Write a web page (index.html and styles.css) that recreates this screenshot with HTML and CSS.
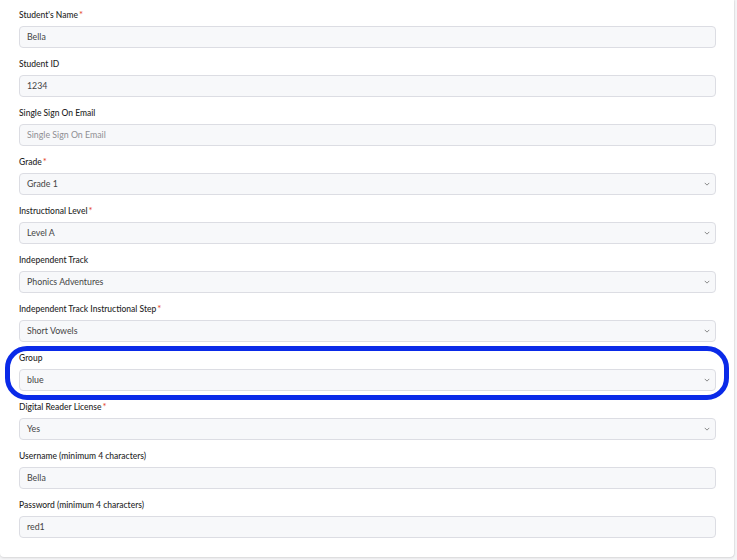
FILE: index.html
```html
<!DOCTYPE html>
<html>
<head>
<meta charset="utf-8">
<link rel="stylesheet" href="styles.css">
</head>
<body>
<div class="card">
  <form class="form">
    <div class="field">
      <label class="label">Student's Name<span class="req">*</span></label>
      <div class="input">Bella</div>
    </div>
    <div class="field">
      <label class="label">Student ID</label>
      <div class="input">1234</div>
    </div>
    <div class="field">
      <label class="label">Single Sign On Email</label>
      <div class="input placeholder">Single Sign On Email</div>
    </div>
    <div class="field">
      <label class="label">Grade<span class="req">*</span></label>
      <div class="input select">Grade 1<svg class="chev" viewBox="0 0 8 5"><path d="M1 1l3 3 3-3" /></svg></div>
    </div>
    <div class="field">
      <label class="label">Instructional Level<span class="req">*</span></label>
      <div class="input select">Level A<svg class="chev" viewBox="0 0 8 5"><path d="M1 1l3 3 3-3" /></svg></div>
    </div>
    <div class="field">
      <label class="label">Independent Track</label>
      <div class="input select">Phonics Adventures<svg class="chev" viewBox="0 0 8 5"><path d="M1 1l3 3 3-3" /></svg></div>
    </div>
    <div class="field">
      <label class="label">Independent Track Instructional Step<span class="req">*</span></label>
      <div class="input select">Short Vowels<svg class="chev" viewBox="0 0 8 5"><path d="M1 1l3 3 3-3" /></svg></div>
    </div>
    <div class="field highlighted">
      <label class="label">Group</label>
      <div class="input select">blue<svg class="chev" viewBox="0 0 8 5"><path d="M1 1l3 3 3-3" /></svg></div>
      <div class="ring"></div>
    </div>
    <div class="field">
      <label class="label">Digital Reader License<span class="req">*</span></label>
      <div class="input select">Yes<svg class="chev" viewBox="0 0 8 5"><path d="M1 1l3 3 3-3" /></svg></div>
    </div>
    <div class="field">
      <label class="label">Username (minimum 4 characters)</label>
      <div class="input">Bella</div>
    </div>
    <div class="field">
      <label class="label">Password (minimum 4 characters)</label>
      <div class="input">red1</div>
    </div>
  </form>
</div>
</body>
</html>
```
FILE: styles.css
```css
html, body {
  margin: 0;
  padding: 0;
}
body {
  background: #f4f4f6;
  font-family: Lato, "Liberation Sans", sans-serif;
  width: 737px;
  height: 560px;
  overflow: hidden;
}
.card {
  width: 734px;
  height: 557px;
  box-sizing: border-box;
  background: #ffffff;
  border-radius: 0 0 4px 4px;
  box-shadow: 0 1px 2px rgba(0, 0, 0, 0.12), 1px 0 1px rgba(0, 0, 0, 0.05);
  padding: 9px 18px 0 19px;
}
.form {
  display: flex;
  flex-direction: column;
  gap: 10px;
}
.field {
  position: relative;
  display: flex;
  flex-direction: column;
  gap: 5px;
}
.label {
  display: block;
  font-size: 8.5px;
  line-height: 12px;
  font-weight: 500;
  color: #1f1f1f;
  height: 12px;
}
.req {
  color: #e5482c;
  margin-left: 1px;
  font-size: 9.5px;
}
.input {
  height: 22px;
  box-sizing: border-box;
  border: 1px solid #dcdde3;
  border-radius: 4px;
  background: #f7f8fa;
  font-size: 8.8px;
  font-weight: 400;
  line-height: 20px;
  padding: 0 7px;
  color: #444444;
  display: flex;
  align-items: center;
  justify-content: space-between;
}
.placeholder {
  color: #8e8e93;
}
.chev {
  width: 6px;
  height: 4px;
  margin-right: -2px;
  fill: none;
  stroke: #666;
  stroke-width: 1;
}
.ring {
  position: absolute;
  left: -14px;
  right: -13px;
  top: -6px;
  bottom: -9px;
  border: 5px solid #0a2ae8;
  border-radius: 22px;
  pointer-events: none;
}
```
